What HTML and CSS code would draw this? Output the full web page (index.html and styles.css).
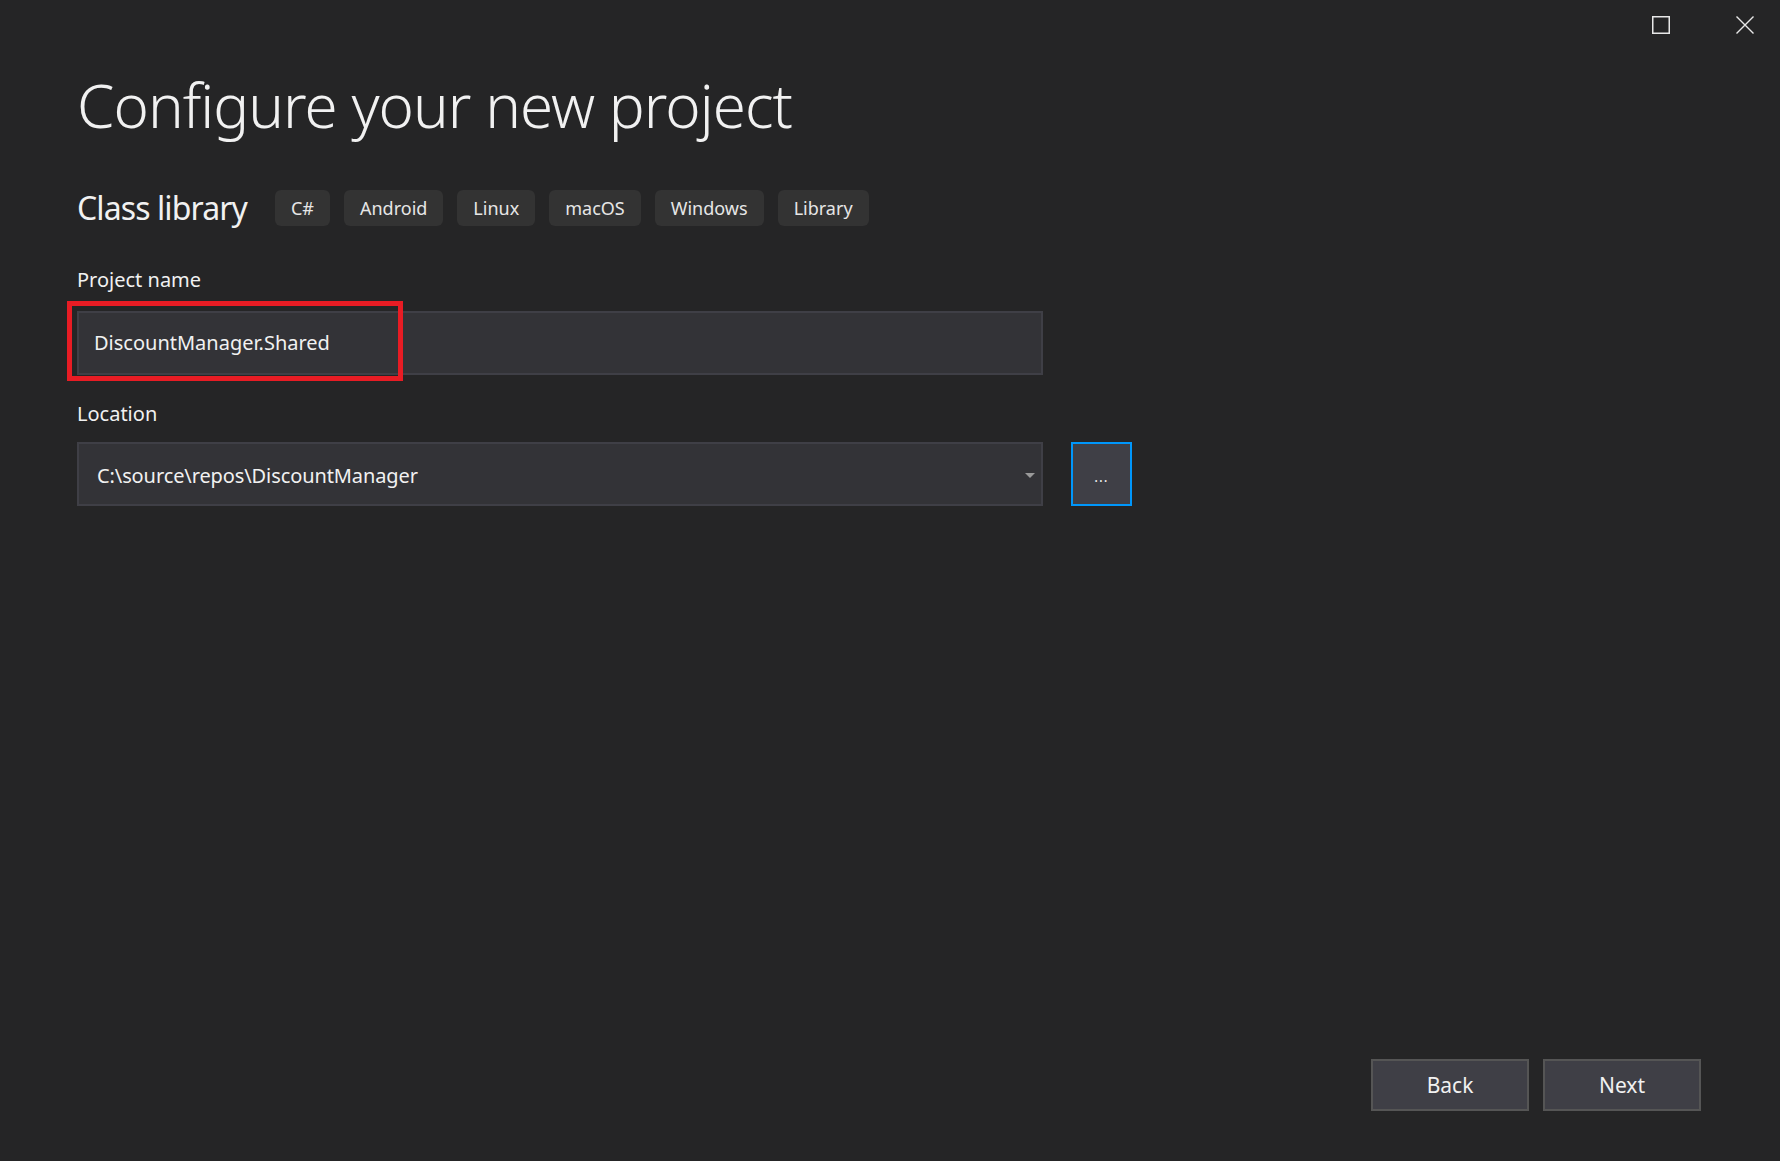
FILE: index.html
```html
<!DOCTYPE html>
<html lang="en">
<head>
<meta charset="utf-8">
<title>Configure your new project</title>
<link rel="stylesheet" href="styles.css">
</head>
<body>
<div class="window">
  <div class="titlebar">
    <span class="win-btn">
      <svg width="18" height="18" viewBox="0 0 18 18"><rect x="0.75" y="0.75" width="16.5" height="16.5" fill="none" stroke="#e8e8e8" stroke-width="1.5"/></svg>
    </span>
    <span class="win-btn">
      <svg width="18" height="18" viewBox="0 0 18 18"><path d="M0.5 0.5 L17.5 17.5 M17.5 0.5 L0.5 17.5" stroke="#e8e8e8" stroke-width="1.4" fill="none"/></svg>
    </span>
  </div>
  <main class="content">
    <h1 class="title">Configure your new project</h1>
    <div class="template-row">
      <span class="template-name">Class library</span>
      <div class="tags">
        <span class="tag">C#</span>
        <span class="tag">Android</span>
        <span class="tag">Linux</span>
        <span class="tag">macOS</span>
        <span class="tag">Windows</span>
        <span class="tag">Library</span>
      </div>
    </div>
    <label class="field-label">Project name</label>
    <div class="field-row">
      <div class="input-wrap">
        <div class="input">DiscountManager.Shared</div>
        <div class="highlight"></div>
      </div>
    </div>
    <label class="field-label loc-label">Location</label>
    <div class="field-row loc-row">
      <div class="input-wrap">
        <div class="input loc-input">C:\source\repos\DiscountManager<span class="caret"></span></div>
      </div>
      <div class="browse">...</div>
    </div>
  </main>
  <footer class="footer">
    <div class="btn">Back</div>
    <div class="btn">Next</div>
  </footer>
</div>
</body>
</html>
```
FILE: styles.css
```css
html, body {
  margin: 0;
  padding: 0;
  background: #252526;
}
body {
  font-family: "Noto Sans", "Open Sans", sans-serif;
  color: #f1f1f1;
}
.window {
  width: 1780px;
  height: 1161px;
  display: flex;
  flex-direction: column;
  box-sizing: border-box;
}
.titlebar {
  display: flex;
  justify-content: flex-end;
  gap: 66px;
  padding: 16px 26px 0 0;
  height: 50px;
  box-sizing: border-box;
}
.win-btn {
  width: 18px;
  height: 18px;
  display: block;
}
.win-btn svg { display: block; }
.content {
  padding-left: 77px;
  display: flex;
  flex-direction: column;
  align-items: flex-start;
}
.title {
  margin: 19px 0 0 0;
  font-size: 60px;
  font-weight: 300;
  line-height: 72px;
  color: #f1f1f1;
  letter-spacing: -0.95px;
}
.template-row {
  display: flex;
  align-items: center;
  margin-top: 49px;
  height: 36px;
}
.template-name {
  font-size: 32px;
  font-weight: 400;
  line-height: 36px;
  margin-right: 28px;
  letter-spacing: -0.9px;
}
.tags {
  display: flex;
  gap: 14px;
}
.tag {
  background: #333333;
  border-radius: 6px;
  height: 36px;
  line-height: 36px;
  padding: 0 16px;
  font-size: 18px;
  color: #e6e6e6;
}
.field-label {
  display: block;
  font-size: 20px;
  line-height: 28px;
  margin-top: 40px;
  color: #f1f1f1;
}
.loc-label {
  margin-top: 25px;
}
.field-row {
  display: flex;
  align-items: flex-start;
  gap: 28px;
  margin-top: 17px;
}
.loc-row {
  margin-top: 14px;
}
.input-wrap {
  position: relative;
}
.input {
  width: 966px;
  height: 64px;
  box-sizing: border-box;
  border: 2px solid #3f3f46;
  background: #333337;
  font-size: 20px;
  line-height: 60px;
  padding-left: 15px;
  color: #f1f1f1;
  position: relative;
}
.loc-input {
  padding-left: 18px;
  padding-top: 3px;
  line-height: 57px;
  letter-spacing: -0.1px;
}
.caret {
  position: absolute;
  right: 6px;
  top: 29px;
  width: 0;
  height: 0;
  border-left: 5px solid transparent;
  border-right: 5px solid transparent;
  border-top: 5px solid #9a9a9a;
}
.highlight {
  position: absolute;
  left: -10px;
  top: -10px;
  width: 336px;
  height: 80px;
  box-sizing: border-box;
  border: 5px solid #e81c24;
}
.browse {
  width: 61px;
  height: 64px;
  box-sizing: border-box;
  border: 2px solid #0097fb;
  background: #3f3f46;
  color: #f1f1f1;
  font-size: 14px;
  text-align: center;
  line-height: 66px;
  letter-spacing: 1px;
}
.footer {
  margin-top: auto;
  display: flex;
  justify-content: flex-end;
  gap: 14px;
  padding: 0 79px 50px 0;
}
.btn {
  width: 158px;
  height: 52px;
  box-sizing: border-box;
  border: 2px solid #555555;
  background: #3f3f46;
  font-size: 21px;
  line-height: 48px;
  text-align: center;
  color: #f1f1f1;
}
```
